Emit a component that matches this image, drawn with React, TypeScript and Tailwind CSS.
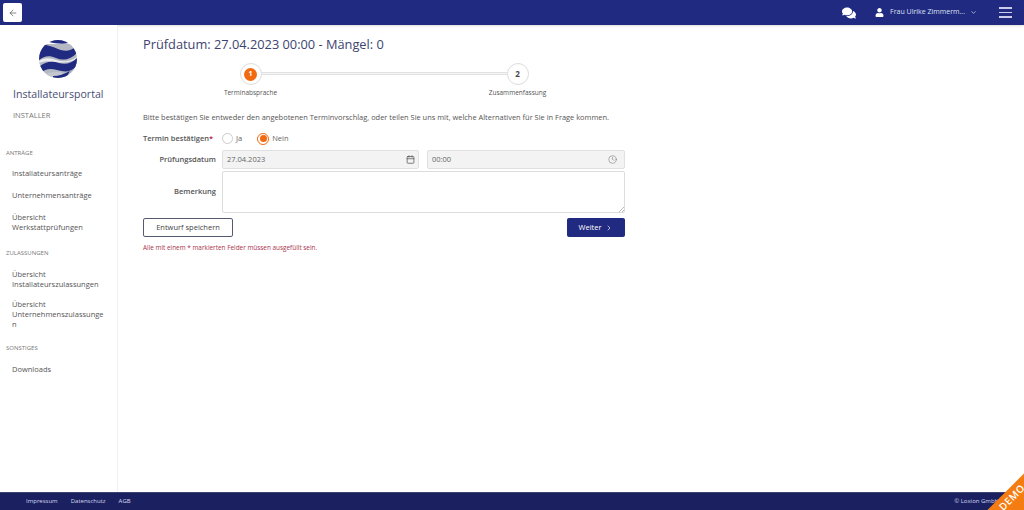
import { ArrowLeft, Calendar, ChevronDown, ChevronRight, Clock } from "lucide-react";
import { FaComments, FaUser } from "react-icons/fa";

const sections = [
  {
    title: "ANTRÄGE",
    items: [["Installateursanträge"], ["Unternehmensanträge"], ["Übersicht", "Werkstattprüfungen"]],
  },
  {
    title: "ZULASSUNGEN",
    items: [
      ["Übersicht", "Installateurszulassungen"],
      ["Übersicht", "Unternehmenszulassunge", "n"],
    ],
  },
  {
    title: "SONSTIGES",
    items: [["Downloads"]],
  },
];

const Logo = () => (
  <svg width="38" height="38" viewBox="0 0 38 38">
    <defs>
      <clipPath id="globe">
        <circle cx="19" cy="19" r="19" />
      </clipPath>
    </defs>
    <g clipPath="url(#globe)">
      <rect width="38" height="38" fill="#ffffff" />
      <path d="M0 4 L38 4 L38 38 L0 38Z" fill="#b4b8c2" />
      <path d="M11 0 L27 0 L30 3 C23 4.5 17 3.5 10 2Z" fill="#1f2a80" />
      <path d="M0 5 C6 4 12 6 19 9 C26 12 32 11 38 6 L38 13 C31 20 24 21 17 18 C10 15 5 16 0 20Z" fill="#1f2a80" />
      <path d="M0 21 C6 17 11 18 17 20 C24 22 31 22 38 17 L38 19 C30 23 23 23 16 22 C10 21 5 21 0 23Z" fill="#eceef2" />
      <path d="M0 27 C7 21 13 21 20 23 C27 25 33 23 38 18 L38 26 C31 33 25 32 18 30 C11 28 6 29 2 33Z" fill="#1f2a80" />
      <path d="M6 34 C12 32 18 31 24 33 L20 38 L8 38Z" fill="#c4c7cf" />
      <path d="M14 36 C20 36 25 34 31 31 L27 38 L14 38Z" fill="#1f2a80" />
    </g>
  </svg>
);

const NavItem = ({ lines }: { lines: string[] }) => (
  <div className="pl-[12px] text-[7.5px] leading-[10px] text-[#555]">
    {lines.map((line) => (
      <div key={line}>{line}</div>
    ))}
  </div>
);

const Sidebar = () => (
  <aside className="w-[118px] shrink-0 border-r border-[#eef0f3] bg-white">
    <div className="flex flex-col pt-[15px]">
      <div className="flex justify-center pr-[1px]">
        <Logo />
      </div>
      <div className="mt-[8px] pl-[13px] text-[10.6px] leading-[17px] text-[#474d73]">Installateursportal</div>
      <div className="mt-[6px] pl-[13px] text-[7.5px] leading-[13px] text-[#777]">INSTALLER</div>
    </div>
    <nav className="mt-[26px]">
      <div className="mb-[16px]">
        <div className="pl-[6px] text-[6px] leading-[10px] text-[#777]">{sections[0].title}</div>
        <div className="mt-[10px] flex flex-col gap-[12px]">
          {sections[0].items.map((lines) => (
            <NavItem key={lines.join()} lines={lines} />
          ))}
        </div>
      </div>
      <div className="mb-[14px]">
        <div className="pl-[6px] text-[6px] leading-[10px] text-[#777]">{sections[1].title}</div>
        <div className="mt-[11px] flex flex-col gap-[10px]">
          {sections[1].items.map((lines) => (
            <NavItem key={lines.join()} lines={lines} />
          ))}
        </div>
      </div>
      <div>
        <div className="pl-[6px] text-[6px] leading-[10px] text-[#777]">{sections[2].title}</div>
        <div className="mt-[11px] flex flex-col">
          {sections[2].items.map((lines) => (
            <NavItem key={lines.join()} lines={lines} />
          ))}
        </div>
      </div>
    </nav>
  </aside>
);

const Stepper = () => (
  <div className="mt-[9px] flex w-[482px] justify-center">
    <div className="flex w-[327px] items-start">
      <div className="flex w-[60px] flex-col items-center">
        <div className="z-10 flex h-[22px] w-[22px] items-center justify-center rounded-full border border-[#ddd] bg-white">
          <div className="flex h-[13px] w-[13px] items-center justify-center rounded-full bg-[#f26a0f] text-[7px] font-bold text-white">1</div>
        </div>
        <div className="mt-[3px] whitespace-nowrap text-[6.5px] leading-[9px] text-[#555]">Terminabsprache</div>
      </div>
      <div className="mx-[-19px] mt-[9px] h-[3px] flex-1 border-y border-[#e2e2e2] bg-[#f4f4f4]" />
      <div className="flex w-[60px] flex-col items-center">
        <div className="z-10 flex h-[22px] w-[22px] items-center justify-center rounded-full border border-[#ddd] bg-white text-[8px] font-bold text-[#444]">2</div>
        <div className="mt-[3px] whitespace-nowrap text-[6.5px] leading-[9px] text-[#555]">Zusammenfassung</div>
      </div>
    </div>
  </div>
);

const Form = () => (
  <div className="w-[482px]">
    <div className="mt-[14px] whitespace-nowrap text-[7.45px] leading-[12px] text-[#555]">
      Bitte bestätigen Sie entweder den angebotenen Terminvorschlag, oder teilen Sie uns mit, welche Alternativen für Sie in Frage kommen.
    </div>
    <div className="mt-[9px] flex h-[13px] items-center">
      <div className="w-[73px] whitespace-nowrap text-[7.5px] font-semibold text-[#555]">
        Termin bestätigen<span className="text-[#b1213a]">*</span>
      </div>
      <div className="ml-[6px] h-[11px] w-[11px] rounded-full border border-[#ccc] bg-white" />
      <div className="ml-[3px] text-[7.5px] text-[#666]">Ja</div>
      <div className="ml-[15px] flex h-[12px] w-[12px] items-center justify-center rounded-full border border-[#f26a0f] bg-white">
        <div className="h-[7px] w-[7px] rounded-full bg-[#f26a0f]" />
      </div>
      <div className="ml-[3px] text-[7.5px] text-[#666]">Nein</div>
    </div>
    <div className="mt-[5px] flex items-center">
      <div className="w-[73px] whitespace-nowrap text-right text-[7.5px] font-semibold text-[#555]">Prüfungsdatum</div>
      <div className="ml-[6px] flex h-[19px] w-[197px] items-center justify-between rounded-[2px] border border-[#e0e0e0] bg-[#f3f3f3] pl-[4px] pr-[3px] text-[7.5px] text-[#666]">
        27.04.2023
        <Calendar size={9} strokeWidth={2} className="text-[#555]" />
      </div>
      <div className="ml-[8px] flex h-[19px] w-[198px] items-center justify-between rounded-[2px] border border-[#e0e0e0] bg-[#f3f3f3] pl-[4px] pr-[7px] text-[7.5px] text-[#666]">
        00:00
        <Clock size={9} strokeWidth={1.5} className="text-[#777]" />
      </div>
    </div>
    <div className="mt-[2px] flex items-center">
      <div className="w-[73px] text-right text-[7.5px] font-semibold text-[#555]">Bemerkung</div>
      <div className="relative ml-[6px] h-[42px] w-[403px] rounded-[2px] border border-[#dcdcdc] bg-white">
        <svg width="6" height="6" viewBox="0 0 6 6" className="absolute bottom-0 right-0">
          <path d="M1 6 L6 1 M4 6 L6 4" stroke="#aaa" strokeWidth="0.8" />
        </svg>
      </div>
    </div>
    <div className="mt-[5px] flex justify-between">
      <div className="flex h-[19px] w-[90px] items-center justify-center rounded-[2px] border border-[#555a70] bg-white text-[7.5px] text-[#444]">Entwurf speichern</div>
      <div className="flex h-[19px] w-[58px] items-center justify-center gap-[4px] rounded-[2px] bg-[#1f2a80] text-[7.5px] text-white">
        Weiter
        <ChevronRight size={8} strokeWidth={2} />
      </div>
    </div>
    <div className="mt-[6px] text-[6.4px] leading-[10px] text-[#a8324a]">Alle mit einem * markierten Felder müssen ausgefüllt sein.</div>
  </div>
);

export default function App() {
  return (
    <div className="relative flex h-[510px] w-[1024px] flex-col overflow-hidden bg-white font-['Open_Sans',sans-serif]">
      <header className="flex h-[25px] shrink-0 items-center bg-[#1f2a80] pl-[3px] shadow-sm">
        <div className="flex h-[19px] w-[19px] items-center justify-center rounded-[2px] bg-white">
          <ArrowLeft size={10} strokeWidth={1.5} className="text-[#444]" />
        </div>
        <div className="ml-auto flex items-center text-white">
          <FaComments size={14} />
          <FaUser size={9} className="ml-[19px]" />
          <span className="ml-[6px] whitespace-nowrap text-[7px] text-[#dfe1f2]">Frau Ulrike Zimmerm...</span>
          <ChevronDown size={7} strokeWidth={2} className="ml-[5px]" />
          <div className="ml-[22px] mr-[12px] flex w-[13px] flex-col gap-[3px]">
            <div className="h-[1.5px] bg-[#c9cdea]" />
            <div className="h-[1.5px] bg-[#c9cdea]" />
            <div className="h-[1.5px] bg-[#c9cdea]" />
          </div>
        </div>
      </header>
      <div className="flex min-h-0 flex-1">
        <Sidebar />
        <main className="flex-1 pl-[25px] pt-[10px]">
          <h1 className="text-[12.8px] font-normal leading-[19px] text-[#3d4470]">Prüfdatum: 27.04.2023 00:00 - Mängel: 0</h1>
          <Stepper />
          <Form />
        </main>
      </div>
      <footer className="flex h-[18px] shrink-0 items-center border-t border-[#3d4470] bg-[#1a2060] pl-[26px] text-[6px] text-[#d8daf0]">
        <span>Impressum</span>
        <span className="ml-[13px]">Datenschutz</span>
        <span className="ml-[13px]">AGB</span>
        <span className="ml-auto mr-[25px] whitespace-nowrap">© Loxion GmbH</span>
      </footer>
      <div className="absolute bottom-[-25px] right-[-50px] flex h-[51px] w-[100px] -rotate-45 items-start justify-center bg-[#f47c10] pt-[3px] text-[10px] font-semibold leading-[11px] tracking-[0.5px] text-white">
        DEMO
      </div>
    </div>
  );
}
